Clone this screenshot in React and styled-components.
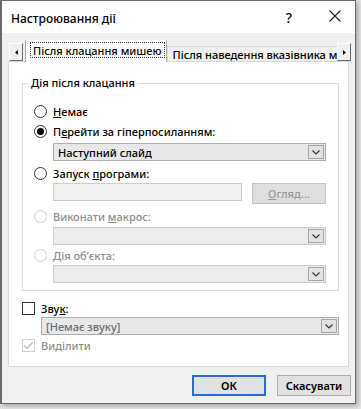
import React from "react";
import styled, { createGlobalStyle } from "styled-components";

const GlobalStyle = createGlobalStyle`
  html, body {
    margin: 0;
    padding: 0;
    background: #e4e4e4;
  }
  body {
    font-family: "Noto Sans", "Open Sans", sans-serif;
    font-size: 11px;
    font-weight: 500;
    color: #000;
  }
`;

const Page = styled.div`
  width: 361px;
  height: 409px;
  background: #e6e6e6;
`;

const Window = styled.div`
  width: 356px;
  height: 404px;
  box-sizing: border-box;
  border: 1px solid #6a6a6a;
  border-left-width: 2px;
  background: #f0f0f0;
  display: flex;
  flex-direction: column;
  box-shadow: 2px 2px 5px rgba(0, 0, 0, 0.3);
`;

const TitleBar = styled.div`
  height: 32px;
  flex: none;
  background: #fff;
  display: flex;
  align-items: center;
  padding-left: 9px;
`;

const Title = styled.div`
  flex: 1;
  font-size: 12px;
  margin-top: 2px;
`;

const HelpMark = styled.div`
  width: 30px;
  text-align: center;
  font-size: 14px;
  margin-right: 11px;
`;

const CloseBtn = styled.div`
  width: 40px;
  display: flex;
  justify-content: center;
  align-items: center;
  margin-top: -2px;
`;

const Body = styled.div`
  flex: 1;
  display: flex;
  flex-direction: column;
  padding: 7px 6px 0 6px;
`;

const TabStrip = styled.div`
  height: 22px;
  display: flex;
  align-items: flex-end;
  margin-bottom: -1px;
  position: relative;
  z-index: 1;
`;

const ScrollBtn = styled.div`
  width: 14px;
  height: 18px;
  box-sizing: border-box;
  flex: none;
  margin: 0 ${(p) => (p.$right ? "-2px" : "2px")} 1px ${(p) => (p.$right ? "0" : "1px")};
  background: #f0f0f0;
  border: 1px solid #fff;
  border-right-color: #696969;
  border-bottom-color: #696969;
  display: flex;
  align-items: center;
  justify-content: center;
`;

const TabList = styled.div`
  flex: 1;
  display: flex;
  align-items: flex-end;
  overflow: hidden;
  height: 22px;
`;

const Tab = styled.div`
  flex: none;
  box-sizing: border-box;
  height: ${(p) => (p.$active ? "23px" : "16px")};
  padding: ${(p) => (p.$active ? "2px 1px 4px 4px" : "0 5px")};
  background: ${(p) => (p.$active ? "#fff" : "#f0f0f0")};
  border: 1px solid ${(p) => (p.$active ? "#adadad" : "#d9d9d9")};
  border-bottom: ${(p) => (p.$active ? "none" : "1px solid #d9d9d9")};
  white-space: nowrap;
  display: flex;
  align-items: ${(p) => (p.$active ? "stretch" : "center")};
`;

const FocusRect = styled.div`
  border: 1px dotted #333;
  padding: 0 2px;
  display: flex;
  align-items: center;
  line-height: 1;
`;

const Panel = styled.div`
  height: 306px;
  box-sizing: border-box;
  background: #fff;
  border: 1px solid #d9d9d9;
  padding: 13px 9px 0 13px;
  display: flex;
  flex-direction: column;
`;

const Group = styled.fieldset`
  margin: 0;
  padding: 10px 12px 7px 11px;
  border: 1px solid #dcdcdc;
  display: flex;
  flex-direction: column;
  min-width: 0;
`;

const Legend = styled.legend`
  padding: 0 3px;
  margin-left: -6px;
  line-height: 16px;
`;

const Row = styled.div`
  height: 20px;
  display: flex;
  align-items: center;
  gap: 6px;
  color: ${(p) => (p.$disabled ? "#8d8d8d" : "#000")};
`;

const Radio = styled.span`
  width: 13px;
  height: 13px;
  box-sizing: border-box;
  border-radius: 50%;
  border: 1px solid ${(p) => (p.$disabled ? "#cfcfcf" : "#333")};
  background: #fff;
  display: flex;
  align-items: center;
  justify-content: center;
  flex: none;
  &::after {
    content: "";
    display: ${(p) => (p.$checked ? "block" : "none")};
    width: 7px;
    height: 7px;
    border-radius: 50%;
    background: #000;
  }
`;

const CheckBox = styled.span`
  width: 13px;
  height: 13px;
  box-sizing: border-box;
  border: 1px solid ${(p) => (p.$disabled ? "#cfcfcf" : "#333")};
  background: #fff;
  display: flex;
  align-items: center;
  justify-content: center;
  flex: none;
`;

const Indented = styled.div`
  margin-left: ${(p) => p.$indent}px;
  margin-top: ${(p) => p.$top || 0}px;
  margin-bottom: ${(p) => p.$bottom || 0}px;
  display: flex;
  gap: 10px;
`;

const Combo = styled.div`
  flex: 1;
  height: 18px;
  box-sizing: border-box;
  border: 1px solid ${(p) => (p.$disabled ? "#cccccc" : "#adadad")};
  background: ${(p) => (p.$disabled ? "#ececec" : "#e8e8e8")};
  display: flex;
  align-items: center;
  padding-left: 4px;
  color: ${(p) => (p.$muted ? "#6d6d6d" : "#000")};
`;

const ComboText = styled.span`
  flex: 1;
  white-space: nowrap;
`;

const ChevronBox = styled.span`
  width: 16px;
  height: 14px;
  box-sizing: border-box;
  margin-right: 1px;
  border: 1px solid #a6a6a6;
  background: #e3e3e3;
  display: flex;
  align-items: center;
  justify-content: center;
`;

const TextField = styled.div`
  flex: 1;
  height: 18px;
  box-sizing: border-box;
  border: 1px solid #cccccc;
  background: #f0f0f0;
`;

const Button = styled.div`
  flex: none;
  width: ${(p) => p.$width || 74}px;
  height: ${(p) => p.$height || 21}px;
  box-sizing: border-box;
  border: 1px solid ${(p) => (p.$primary ? "#2a6ad4" : p.$disabled ? "#c4c4c4" : "#adadad")};
  box-shadow: ${(p) => (p.$primary ? "inset 0 0 0 1px #2a6ad4" : "none")};
  background: ${(p) => (p.$disabled ? "#dedede" : "#e1e1e1")};
  color: ${(p) => (p.$disabled ? "#9a9a9a" : "#000")};
  display: flex;
  align-items: center;
  justify-content: center;
  font-weight: ${(p) => (p.$disabled ? 500 : 600)};
`;

const Below = styled.div`
  margin-top: 7px;
  display: flex;
  flex-direction: column;
`;

const Footer = styled.div`
  flex: 1;
  display: flex;
  justify-content: flex-end;
  gap: 11px;
  padding: 8px 0 0 0;
  margin-right: -2px;
`;

const U = styled.span`
  text-decoration: underline;
`;

const Chevron = () => (
  <svg width="8" height="5" viewBox="0 0 8 5">
    <polyline points="0.5,0.5 4,4 7.5,0.5" fill="none" stroke="#333" strokeWidth="1.2" />
  </svg>
);

const Arrow = ({ right }) => (
  <svg width="3" height="5" viewBox="0 0 3 5">
    <polygon points={right ? "0,0 3,2.5 0,5" : "3,0 0,2.5 3,5"} fill="#111" />
  </svg>
);

const CheckMark = () => (
  <svg width="11" height="9" viewBox="0 0 11 9">
    <polyline points="1,4.5 4,7.5 10,1" fill="none" stroke="#b5b5b5" strokeWidth="1.2" />
  </svg>
);

const ComboBox = ({ children, disabled, muted }) => (
  <Combo $disabled={disabled} $muted={muted}>
    <ComboText>{children}</ComboText>
    <ChevronBox>
      <Chevron />
    </ChevronBox>
  </Combo>
);

export default function App() {
  return (
    <Page>
      <GlobalStyle />
      <Window>
        <TitleBar>
          <Title>Настроювання дії</Title>
          <HelpMark>?</HelpMark>
          <CloseBtn>
            <svg width="12" height="12" viewBox="0 0 12 12">
              <path d="M0.5 0.5 L11.5 11.5 M11.5 0.5 L0.5 11.5" stroke="#222" strokeWidth="1.1" />
            </svg>
          </CloseBtn>
        </TitleBar>
        <Body>
          <TabStrip>
            <ScrollBtn>
              <Arrow />
            </ScrollBtn>
            <TabList>
              <Tab $active>
                <FocusRect>Після клацання мишею</FocusRect>
              </Tab>
              <Tab>Після наведення вказівника миші</Tab>
            </TabList>
            <ScrollBtn $right>
              <Arrow right />
            </ScrollBtn>
          </TabStrip>
          <Panel>
            <Group>
              <Legend>Дія після клацання</Legend>
              <Row>
                <Radio />
                <span>
                  <U>Н</U>емає
                </span>
              </Row>
              <Row>
                <Radio $checked />
                <span>
                  П<U>е</U>рейти за гіперпосиланням:
                </span>
              </Row>
              <Indented $indent={19} $top={2} $bottom={2}>
                <ComboBox>Наступний слайд</ComboBox>
              </Indented>
              <Row>
                <Radio />
                <span>
                  Запуск <U>п</U>рограми:
                </span>
              </Row>
              <Indented $indent={19} $top={0} $bottom={2}>
                <TextField />
                <Button $disabled $width={74} $height={21}>
                  <span>
                    <U>О</U>гляд...
                  </span>
                </Button>
              </Indented>
              <Row $disabled>
                <Radio $disabled />
                <span>
                  Виконати <U>м</U>акрос:
                </span>
              </Row>
              <Indented $indent={19} $top={1} $bottom={0}>
                <ComboBox disabled />
              </Indented>
              <Row $disabled>
                <Radio $disabled />
                <span>
                  <U>Д</U>ія об’єкта:
                </span>
              </Row>
              <Indented $indent={19} $top={0}>
                <ComboBox disabled />
              </Indented>
            </Group>
            <Below>
              <Row>
                <CheckBox />
                <span>
                  Зву<U>к</U>:
                </span>
              </Row>
              <Indented $indent={19} $top={-1} $bottom={0}>
                <ComboBox muted>[Немає звуку]</ComboBox>
              </Indented>
              <Row $disabled>
                <CheckBox $disabled>
                  <CheckMark />
                </CheckBox>
                <span>
                  Ви<U>д</U>ілити
                </span>
              </Row>
            </Below>
          </Panel>
          <Footer>
            <Button $primary>ОК</Button>
            <Button>Скасувати</Button>
          </Footer>
        </Body>
      </Window>
    </Page>
  );
}
